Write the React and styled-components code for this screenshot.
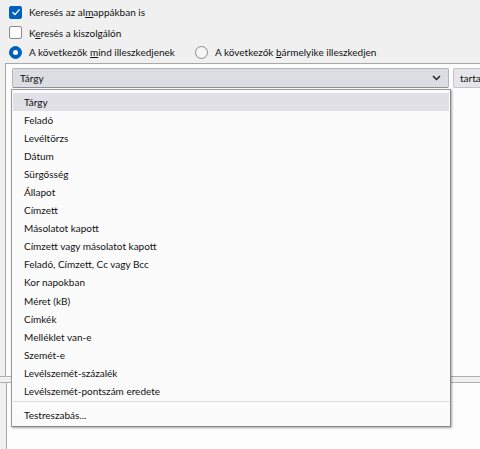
import styled, { createGlobalStyle } from "styled-components";

const GlobalStyle = createGlobalStyle`
  body {
    margin: 0;
    background: #f0f0f0;
    font-family: Lato, "Noto Sans", sans-serif;
    font-size: 10px;
    color: #111;
  }
`;

const Page = styled.div`
  position: relative;
  width: 480px;
  height: 449px;
  overflow: hidden;
  background: #f0f0f0;
`;

const Options = styled.div`
  display: flex;
  flex-direction: column;
  padding: 2px 0 0 9px;
  height: 63px;
  box-sizing: border-box;
`;

const OptionRow = styled.label`
  display: flex;
  align-items: center;
  gap: 7px;
  height: ${({ h }) => h || 20}px;
  white-space: nowrap;
`;

const Box = styled.span`
  width: 13px;
  height: 13px;
  box-sizing: border-box;
  border-radius: 2px;
  display: flex;
  align-items: center;
  justify-content: center;
  background: ${({ checked }) => (checked ? "#0060bf" : "#fdfdfd")};
  border: 1px solid ${({ checked }) => (checked ? "#0060bf" : "#8a8a8a")};
`;

const Radio = styled.span`
  width: 13px;
  height: 13px;
  box-sizing: border-box;
  border-radius: 50%;
  display: flex;
  align-items: center;
  justify-content: center;
  background: ${({ checked }) => (checked ? "#0060bf" : "#f6f6f6")};
  border: 1px solid ${({ checked }) => (checked ? "#0060bf" : "#8a8a8a")};

  &::after {
    content: "";
    display: ${({ checked }) => (checked ? "block" : "none")};
    width: 5px;
    height: 5px;
    border-radius: 50%;
    background: #ffffff;
  }
`;

const RadioGroup = styled.div`
  display: grid;
  grid-template-columns: 186px auto;
  align-items: center;
`;

const RulesPanel = styled.div`
  margin-left: 5px;
  height: 313px;
  border-top: 1px solid #a8a8a8;
  border-left: 1px solid #a8a8a8;
  background: #fcfcfc;
  padding: 4px 0 0 6px;
  box-sizing: border-box;
`;

const RuleRow = styled.div`
  display: flex;
  gap: 4px;
  height: 20px;
`;

const Combo = styled.div`
  flex: 0 0 437px;
  box-sizing: border-box;
  display: flex;
  align-items: center;
  justify-content: space-between;
  padding: 0 7px 0 7px;
  background: #dcdce3;
  border: 1px solid #b4b4bd;
  border-bottom-color: #8f8f98;
  border-radius: 2px;
`;

const SideButton = styled.div`
  flex: 0 0 60px;
  display: flex;
  align-items: center;
  padding: 0 6px;
  white-space: nowrap;
  overflow: hidden;
  background: #e6e6ea;
  border: 1px solid #c3c3c8;
  border-radius: 2px;
`;

const Splitter = styled.div`
  height: 7px;
  border-top: 1px solid #b0b0b0;
  border-bottom: 1px solid #b0b0b0;
  background: #f0f0f0;
  box-sizing: border-box;
`;

const ResultsPanel = styled.div`
  margin-left: 6px;
  height: 80px;
  border-left: 1px solid #a8a8a8;
  background: #fdfdfd;
`;

const Menu = styled.div`
  position: absolute;
  left: 11px;
  top: 89px;
  width: 440px;
  height: 338px;
  box-sizing: border-box;
  padding: 3px 1px 3px;
  background: #fbfbfb;
  border: 1px solid #9a9a9a;
  border-right-color: #8a8a8a;
  border-bottom-color: #8a8a8a;
  box-shadow: 1px 1px 2px rgba(0, 0, 0, 0.35);
`;

const MenuItem = styled.div`
  height: 18.06px;
  line-height: 18px;
  padding-left: 11px;
  background: ${({ active }) => (active ? "#e0e0e6" : "transparent")};
`;

const Separator = styled.div`
  height: 1px;
  margin: 1px 0 4px;
  background: #dcdcdc;
`;

const items = [
  "Tárgy",
  "Feladó",
  "Levéltörzs",
  "Dátum",
  "Sürgősség",
  "Állapot",
  "Címzett",
  "Másolatot kapott",
  "Címzett vagy másolatot kapott",
  "Feladó, Címzett, Cc vagy Bcc",
  "Kor napokban",
  "Méret (kB)",
  "Címkék",
  "Melléklet van-e",
  "Szemét-e",
  "Levélszemét-százalék",
  "Levélszemét-pontszám eredete",
];

function Check() {
  return (
    <svg width="10" height="10" viewBox="0 0 10 10">
      <path d="M1.5 5.2 L4 7.6 L8.6 2.4" fill="none" stroke="#fff" strokeWidth="1.4" />
    </svg>
  );
}

function Chevron() {
  return (
    <svg width="9" height="6" viewBox="0 0 9 6">
      <path d="M1 1 L4.5 4.5 L8 1" fill="none" stroke="#222" strokeWidth="1.5" />
    </svg>
  );
}

export default function App() {
  return (
    <Page>
      <GlobalStyle />
      <Options>
        <OptionRow h={20}>
          <Box checked>
            <Check />
          </Box>
          <span>
            Keresés az al<u>m</u>appákban is
          </span>
        </OptionRow>
        <OptionRow h={21}>
          <Box />
          <span>
            K<u>e</u>resés a kiszolgálón
          </span>
        </OptionRow>
        <OptionRow h={18}>
          <RadioGroup>
            <OptionRow as="span">
              <Radio checked />
              <span>
                A következők <u>m</u>ind illeszkedjenek
              </span>
            </OptionRow>
            <OptionRow as="span">
              <Radio />
              <span>
                A következők <u>b</u>ármelyike illeszkedjen
              </span>
            </OptionRow>
          </RadioGroup>
        </OptionRow>
      </Options>
      <RulesPanel>
        <RuleRow>
          <Combo>
            <span>Tárgy</span>
            <Chevron />
          </Combo>
          <SideButton>tartalmazza</SideButton>
        </RuleRow>
      </RulesPanel>
      <Splitter />
      <ResultsPanel />
      <Menu>
        {items.map((label, i) => (
          <MenuItem key={label} active={i === 0}>
            {label}
          </MenuItem>
        ))}
        <Separator />
        <MenuItem>Testreszabás...</MenuItem>
      </Menu>
    </Page>
  );
}
